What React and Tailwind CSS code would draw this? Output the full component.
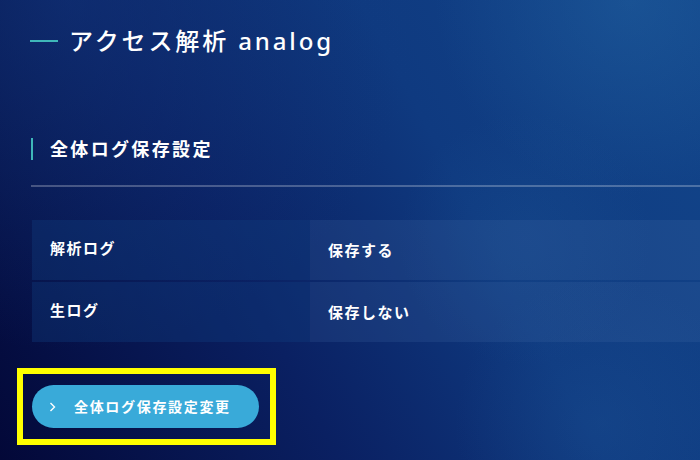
import React from 'react'

const rows = [
  { label: '解析ログ', value: '保存する' },
  { label: '生ログ', value: '保存しない' },
]

const ChevronRight = ({ className }) => (
  <svg viewBox="0 0 7 10" className={className} fill="none" stroke="currentColor" strokeWidth="1.4">
    <polyline points="1.5,1 5.5,5 1.5,9" />
  </svg>
)

export default function App() {
  return (
    <div
      className="relative w-[700px] h-[460px] overflow-hidden text-white bg-[radial-gradient(circle_at_90%_0%,rgba(40,110,170,0.35),transparent_25%),radial-gradient(circle_at_86%_92%,rgba(30,85,150,0.3),transparent_20%),radial-gradient(circle_at_75%_52%,rgba(35,100,160,0.18),transparent_22%),radial-gradient(circle_at_10%_0%,rgba(20,60,130,0.45),transparent_45%),linear-gradient(62deg,#030838_0%,#0a2062_36%,#0f3a80_64%,#12458a_100%)]"
      style={{ fontFamily: '"Noto Sans", "Noto Sans CJK JP", sans-serif' }}
    >
      {/* Page title */}
      <div className="flex items-center gap-[11px] pl-[30px] pt-[23px] h-[59px]">
        <span className="w-[28px] h-[2px] bg-[#3fb7b9]" />
        <h1 className="text-[24px] leading-[36px] tracking-[0.12em] font-medium">アクセス解析 analog</h1>
      </div>

      <div className="pl-[31px] pt-[79px]">
        {/* Section heading */}
        <div className="flex items-center h-[22px] border-l-2 border-[#3fb7b9] pl-[17px]">
          <h2 className="text-[18px] leading-[22px] font-bold tracking-[0.13em]">全体ログ保存設定</h2>
        </div>
        <div className="mt-[25px] h-[2px] bg-white/25" />

        {/* Settings table */}
        <div className="mt-[33px] ml-px flex flex-col gap-[2px]">
          {rows.map((row) => (
            <div key={row.label} className="flex h-[60px]">
              <div className="w-[278px] flex items-center pl-[18px] pb-[3px] bg-[rgba(18,62,130,0.35)]">
                <span className="text-[15px] font-bold tracking-[0.1em]">{row.label}</span>
              </div>
              <div className="flex-1 flex items-center pl-[18px] bg-[rgba(70,110,170,0.2)]">
                <span className="text-[15px] font-bold tracking-[0.1em]">{row.value}</span>
              </div>
            </div>
          ))}
        </div>

        {/* Action button */}
        <div className="relative mt-[43px] ml-px w-[227px]">
          <button className="w-[227px] h-[43px] rounded-full bg-[#39aad9] flex items-center pl-[17px] text-white">
            <ChevronRight className="w-[7px] h-[10px]" />
            <span className="ml-[18px] text-[14px] font-bold tracking-[0.12em]">全体ログ保存設定変更</span>
          </button>
          <span className="pointer-events-none absolute -left-[15px] -top-[17px] -right-[17px] -bottom-[17px] border-[6px] border-[#ffff00]" />
        </div>
      </div>
    </div>
  )
}
